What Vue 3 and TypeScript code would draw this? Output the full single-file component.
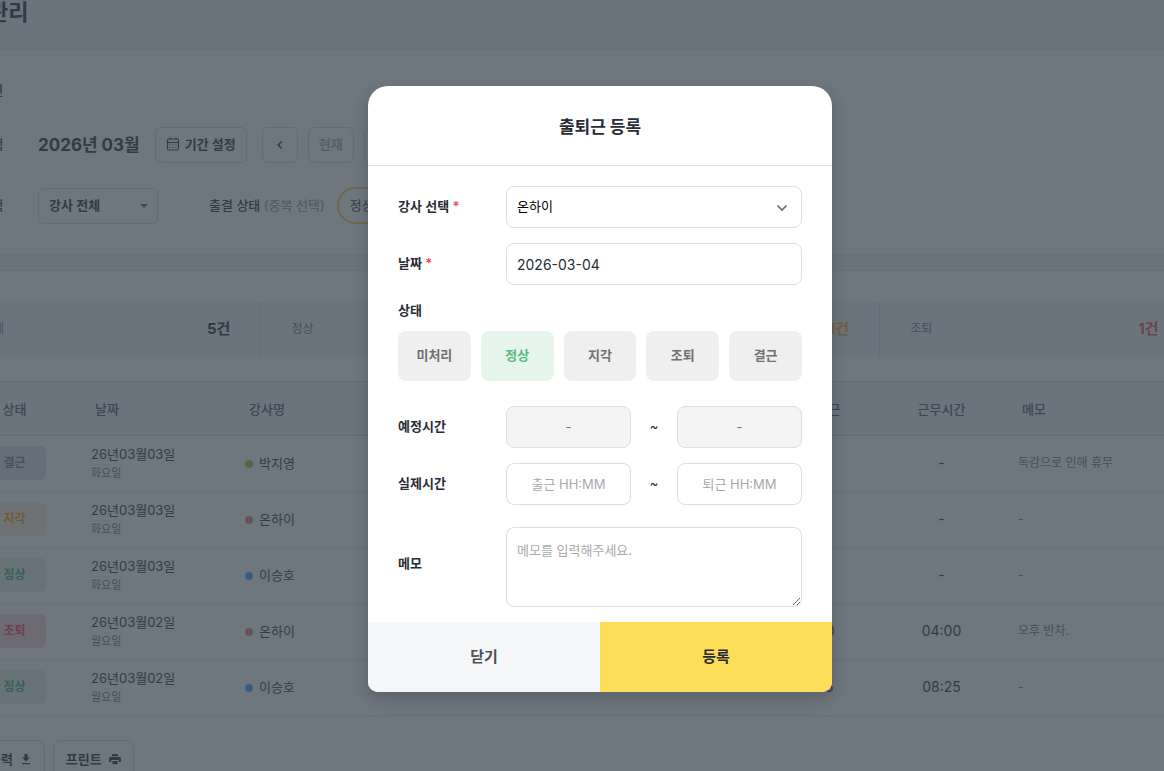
<script setup lang="ts">
import { ref } from 'vue'

interface AttendanceRow {
  status: string
  tone: string
  date: string
  day: string
  name: string
  dot: string
  out: string
  hours: string
  memo: string
}

const rows: AttendanceRow[] = [
  { status: '결근', tone: 'absent', date: '26년03월03일', day: '화요일', name: '박지영', dot: 'lime', out: '-', hours: '-', memo: '독감으로 인해 휴무' },
  { status: '지각', tone: 'late', date: '26년03월03일', day: '화요일', name: '온하이', dot: 'coral', out: '-', hours: '-', memo: '-' },
  { status: '정상', tone: 'normal', date: '26년03월03일', day: '화요일', name: '이승호', dot: 'sky', out: '-', hours: '-', memo: '-' },
  { status: '조퇴', tone: 'early', date: '26년03월02일', day: '월요일', name: '온하이', dot: 'coral', out: '13:00', hours: '04:00', memo: '오후 반차.' },
  { status: '정상', tone: 'normal', date: '26년03월02일', day: '월요일', name: '이승호', dot: 'sky', out: '17:25', hours: '08:25', memo: '-' },
]

const stats = [
  { label: '전체', count: 5, tone: 'all' },
  { label: '정상', count: 2, tone: 'normal' },
  { label: '지각', count: 1, tone: 'late' },
  { label: '조퇴', count: 1, tone: 'early' },
  { label: '결근', count: 1, tone: 'absent' },
]

const states = ['미처리', '정상', '지각', '조퇴', '결근']
const selectedState = ref('정상')
const teacher = ref('온하이')
const workDate = ref('2026-03-04')
const timeIn = ref('')
const timeOut = ref('')
const memo = ref('')
</script>

<template>
  <div class="screen">
    <main class="page">
      <header class="page-head"><h1>출퇴근 관리</h1></header>

      <section class="panel filters">
        <div class="filter-row"><span class="filter-label">보기 화면</span></div>
        <div class="filter-row">
          <span class="filter-label">기간 선택</span>
          <strong class="month">2026년 03월</strong>
          <button type="button" class="btn period">
            <svg width="14" height="14" viewBox="0 0 14 14" fill="none" stroke="currentColor" stroke-width="1.2">
              <rect x="1.5" y="2" width="11" height="11" rx="1.5" />
              <path d="M1.5 5.5h11M4 .5v2M10 .5v2" />
              <path d="M3.5 8h1.2M6.4 8h1.2M9.3 8h1.2M3.5 10.5h1.2M6.4 10.5h1.2M9.3 10.5h1.2" />
            </svg>
            기간 설정
          </button>
          <button type="button" class="btn square" aria-label="이전">
            <svg width="8" height="10" viewBox="0 0 8 10" fill="none" stroke="currentColor" stroke-width="1.5"><path d="M5.5 1.5 2.2 5l3.3 3.5" /></svg>
          </button>
          <button type="button" class="btn now" disabled>현재</button>
          <button type="button" class="btn square" aria-label="다음">
            <svg width="8" height="10" viewBox="0 0 8 10" fill="none" stroke="currentColor" stroke-width="1.5"><path d="M2.5 1.5 5.8 5 2.5 8.5" /></svg>
          </button>
        </div>
        <div class="filter-row">
          <label class="filter-label" for="teacher-filter">강사 선택</label>
          <div class="teacher-filter">
            <select id="teacher-filter"><option>강사 전체</option></select>
            <svg width="8" height="4" viewBox="0 0 8 4" fill="currentColor"><path d="M0 0h8L4 4z" /></svg>
          </div>
          <span class="state-label">출결 상태 <em>(중복 선택)</em></span>
          <button type="button" class="chip">정상</button>
        </div>
      </section>

      <section class="panel list">
        <div class="stats">
          <div v-for="s in stats" :key="s.label" class="stat">
            <span>{{ s.label }}</span>
            <strong :class="s.tone">{{ s.count }}건</strong>
          </div>
        </div>

        <table>
          <colgroup>
            <col class="c-time" /><col class="c-date" /><col class="c-name" />
            <col class="c-time" /><col class="c-time" /><col class="c-time" /><col class="c-time" /><col class="c-time" />
            <col />
          </colgroup>
          <thead>
            <tr>
              <th>상태</th>
              <th class="left">날짜</th>
              <th class="left">강사명</th>
              <th>예정출근</th>
              <th>예정퇴근</th>
              <th>실제출근</th>
              <th>실제퇴근</th>
              <th>근무시간</th>
              <th class="left">메모</th>
            </tr>
          </thead>
          <tbody>
            <tr v-for="(r, i) in rows" :key="i">
              <td><span class="badge" :class="r.tone">{{ r.status }}</span></td>
              <td class="left"><div class="date">{{ r.date }}</div><div class="day">{{ r.day }}</div></td>
              <td class="left"><span class="dot" :class="r.dot"></span>{{ r.name }}</td>
              <td>-</td>
              <td>-</td>
              <td>-</td>
              <td class="num">{{ r.out }}</td>
              <td class="num">{{ r.hours }}</td>
              <td class="left memo">{{ r.memo }}</td>
            </tr>
          </tbody>
        </table>

        <div class="exports">
          <button type="button" class="btn export">엑셀출력
            <svg width="12" height="12" viewBox="0 0 12 12" fill="currentColor"><path d="M4.5 1h3v3.5H10L6 8.500 2 4.500h2.500zM2 10h8v1.300H2z" /></svg>
          </button>
          <button type="button" class="btn export">프린트
            <svg width="12" height="12" viewBox="0 0 12 12" fill="currentColor"><path d="M3 1h6v2.300H3zM1.600 4h8.800C11.300 4 12 4.700 12 5.500V9H9.700V7H2.300v2H0V5.500C0 4.700.7 4 1.600 4zM3.400 8h5.200v3.300H3.400z" /></svg>
          </button>
        </div>
      </section>
    </main>

    <div class="overlay">
      <form class="modal" role="dialog" aria-modal="true" aria-labelledby="modal-title" @submit.prevent>
        <header class="modal-head"><h2 id="modal-title">출퇴근 등록</h2></header>
        <div class="modal-body">
          <div class="field">
            <label for="teacher">강사 선택 <i>*</i></label>
            <div class="select-wrap">
              <select id="teacher" v-model="teacher" class="control">
                <option>온하이</option><option>박지영</option><option>이승호</option>
              </select>
              <svg width="12" height="8" viewBox="0 0 12 8" fill="none" stroke="currentColor" stroke-width="1.600"><path d="m1.500 1.500 4.500 4.500 4.500-4.500" /></svg>
            </div>
          </div>
          <div class="field">
            <label for="work-date">날짜 <i>*</i></label>
            <input id="work-date" v-model="workDate" class="control numeric" type="text" />
          </div>
          <div class="state-field">
            <span id="state-title" class="title">상태</span>
            <div class="states" role="group" aria-labelledby="state-title">
              <button
                v-for="s in states"
                :key="s"
                type="button"
                class="state"
                :class="{ active: s === selectedState }"
                :aria-pressed="s === selectedState"
                @click="selectedState = s"
              >{{ s }}</button>
            </div>
          </div>
          <div class="field">
            <label for="plan-in">예정시간</label>
            <div class="range">
              <input id="plan-in" class="control" type="text" value="-" disabled />
              <span>~</span>
              <input class="control" type="text" value="-" aria-label="예정 퇴근" disabled />
            </div>
          </div>
          <div class="field">
            <label for="real-in">실제시간</label>
            <div class="range">
              <input id="real-in" v-model="timeIn" class="control" type="text" placeholder="출근 HH:MM" />
              <span>~</span>
              <input v-model="timeOut" class="control" type="text" placeholder="퇴근 HH:MM" aria-label="실제 퇴근" />
            </div>
          </div>
          <div class="field memo-field">
            <label for="memo">메모</label>
            <textarea id="memo" v-model="memo" class="control" placeholder="메모를 입력해주세요."></textarea>
          </div>
        </div>
        <footer class="modal-foot">
          <button type="button" class="close">닫기</button>
          <button type="submit" class="submit">등록</button>
        </footer>
      </form>
    </div>
  </div>
</template>

<style>
body {
  margin: 0;
  overflow: hidden;
}
</style>

<style scoped>
* {
  box-sizing: border-box;
}
.screen {
  position: relative;
  height: 100vh;
  overflow: hidden;
  background: #f4f5f8;
  color: #282c35;
  font: 400 13px/20px Inter, "Noto Sans CJK KR", sans-serif;
}
button,
input,
select,
textarea {
  font: inherit;
  color: inherit;
  margin: 0;
}
h1,
h2 {
  margin: 0;
}
/* the page is scrolled sideways: its left edge sits outside the window */
.page {
  margin: 0 -335px 0 -78px;
}
.page-head {
  height: 49px;
}
h1 {
  font-size: 22px;
  line-height: 24px;
  font-weight: 700;
}
.panel {
  background: #fff;
  border-top: 1px solid #e0e2e8;
  padding: 0 0 0 30px;
}
.filters {
  display: flex;
  flex-direction: column;
  gap: 24px;
  height: 206px;
  padding-top: 22px;
  border-bottom: 1px solid #e0e2e8;
}
.filter-row {
  display: flex;
  align-items: center;
  height: 37px;
}
.filter-row:first-child {
  margin-bottom: -7px;
}
.filter-label,
.state-label {
  padding-bottom: 2px;
  font-weight: 500;
}
.filter-label {
  width: 86px;
}
.month {
  font-size: 17px;
  font-weight: 700;
  margin-right: 15px;
}
.btn {
  display: flex;
  align-items: center;
  justify-content: center;
  gap: 5px;
  height: 36px;
  padding: 0 10px 2px;
  background: #fff;
  border: 1px solid #d4d9e2;
  border-radius: 6px;
  font-weight: 600;
}
.period {
  margin-right: 15px;
}
.square {
  width: 36px;
  padding: 0;
}
.now {
  margin: 0 10px;
  color: #a8abb4;
}
.teacher-filter {
  position: relative;
  width: 120px;
  height: 36px;
  margin-right: 51px;
}
.teacher-filter select {
  width: 100%;
  height: 100%;
  padding: 0 10px 2px;
  appearance: none;
  background: #fff;
  border: 1px solid #d4d9e2;
  border-radius: 6px;
  font-weight: 600;
}
.teacher-filter svg {
  position: absolute;
  right: 10px;
  top: 16px;
  color: #555963;
}
.state-label {
  margin-right: 12px;
}
.state-label em {
  font-style: normal;
  color: #a0a3ac;
}
.chip {
  height: 37px;
  padding: 0 11px 2px;
  background: #fff;
  border: 2px solid #f5cf3c;
  border-radius: 19px;
}
.list {
  margin-top: 15px;
  padding-top: 31px;
  height: 700px;
}
.stats {
  display: grid;
  grid-template-columns: repeat(5, 1fr);
  height: 54px;
  background: #f4f5f8;
}
.stat {
  display: flex;
  align-items: center;
  justify-content: space-between;
  padding: 0 30px;
  border-right: 1px solid #dcdfe6;
  color: #70747e;
  font-size: 12px;
}
.stat strong {
  font-size: 15px;
  font-weight: 700;
  color: #22262e;
}
.stat strong.late {
  color: #ffa81c;
}
.stat strong.early {
  color: #f04452;
}
table {
  width: 100%;
  margin-top: 25px;
  table-layout: fixed;
  border-collapse: collapse;
}
.c-time {
  width: 125px;
}
.c-date {
  width: 154px;
}
.c-name {
  width: 148px;
}
th {
  height: 54px;
  padding: 0;
  background: #f4f5f8;
  border-top: 1px solid #d9dce3;
  border-bottom: 1px solid #d9dce3;
  color: #50545e;
  font-weight: 500;
  text-align: center;
}
td {
  height: 56px;
  padding: 0 0 2px;
  border-bottom: 1px solid #e6e8ed;
  text-align: center;
}
th.left {
  padding-left: 18px;
  text-align: left;
}
td.left {
  padding-left: 14px;
  text-align: left;
}
.num {
  font-size: 14px;
}
.date {
  line-height: 20px;
}
.day {
  color: #70747e;
  font-size: 11px;
  line-height: 18px;
}
td.memo {
  color: #70747e;
  font-size: 12px;
}
.badge {
  display: block;
  width: 62px;
  margin: 0 auto;
  border-radius: 6px;
  line-height: 34px;
  font-size: 12px;
  font-weight: 600;
}
.badge.absent {
  background: #e2e5ec;
  color: #777b85;
}
.badge.late {
  background: #fff0dc;
  color: #ff9d00;
}
.badge.normal {
  background: #e6f0ec;
  color: #3fb56c;
}
.badge.early {
  background: #ffd5dc;
  color: #f04452;
}
.dot {
  display: inline-block;
  width: 8px;
  height: 8px;
  margin-right: 6px;
  border-radius: 50%;
}
.dot.lime {
  background: #8fce4e;
}
.dot.coral {
  background: #f0757a;
}
.dot.sky {
  background: #4fa3f0;
}
.exports {
  display: flex;
  gap: 8px;
  margin-top: 24px;
}
.export {
  height: 40px;
  padding: 0 12px 2px;
  gap: 7px;
  border-radius: 8px;
}
.overlay {
  position: absolute;
  inset: 0;
  display: flex;
  align-items: center;
  justify-content: center;
  padding: 7px 0 0 36px;
  background: rgba(54, 65, 76, 0.72);
}
.modal {
  width: 464px;
  border-radius: 20px 20px 10px 10px;
  overflow: hidden;
  background: #fff;
  box-shadow: 0 6px 16px rgba(30, 36, 46, 0.25);
}
.modal-head {
  display: flex;
  align-items: center;
  justify-content: center;
  height: 80px;
  padding-top: 2px;
  border-bottom: 1px solid #dedfe3;
}
h2 {
  font-size: 17px;
  line-height: 24px;
  font-weight: 700;
}
.modal-body {
  padding: 20px 30px 15px;
}
.field {
  display: grid;
  grid-template-columns: 108px 1fr;
  align-items: center;
  margin-bottom: 15px;
}
.field label,
.title {
  font-weight: 600;
}
.field label {
  padding-bottom: 2px;
}
.field i {
  font-style: normal;
  color: #f04452;
}
.control {
  display: block;
  width: 100%;
  min-width: 0;
  height: 42px;
  padding: 0 10px;
  background: #fff;
  border: 1px solid #dcdee2;
  border-radius: 8px;
}
.control::placeholder {
  color: #a8a9ac;
  opacity: 1;
}
.numeric {
  font-size: 14px;
}
.select-wrap {
  position: relative;
}
.select-wrap select {
  padding-bottom: 2px;
  appearance: none;
  color: #000;
}
.select-wrap svg {
  position: absolute;
  right: 14px;
  top: 18px;
  color: #666;
}
.state-field {
  margin-bottom: 25px;
}
.title {
  display: block;
  margin-bottom: 11px;
}
.states {
  display: grid;
  grid-template-columns: repeat(5, 1fr);
  gap: 10px;
}
.state {
  height: 50px;
  padding: 0 0 2px;
  border: 0;
  border-radius: 8px;
  background: #efefef;
  color: #707070;
  font-weight: 600;
}
.state.active {
  background: #e5f5eb;
  color: #56bb80;
}
.range {
  display: grid;
  grid-template-columns: 1fr 46px 1fr;
  align-items: center;
  text-align: center;
}
.range span {
  padding-bottom: 2px;
}
.range .control {
  text-align: center;
}
.range .control:disabled {
  background: #f4f4f4;
  color: #777;
}
.memo-field {
  margin: 22px 0 0;
}
.memo-field label {
  padding-bottom: 8px;
}
.memo-field textarea {
  height: 80px;
  padding: 12px 10px;
  resize: vertical;
}
.modal-foot {
  display: grid;
  grid-template-columns: 1fr 1fr;
}
.modal-foot button {
  height: 70px;
  border: 0;
  font-size: 15px;
  font-weight: 700;
}
.close {
  background: #f4f6f8;
  color: #4c4f57;
}
.submit {
  background: #fede59;
}
</style>
